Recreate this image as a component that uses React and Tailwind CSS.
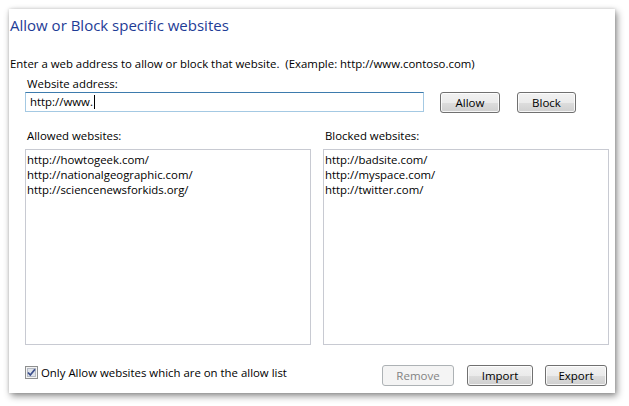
import React from "react";

const font = { fontFamily: '"Open Sans", "Noto Sans", "Liberation Sans", sans-serif' };

function WinButton({ children, w, disabled }) {
  return (
    <div
      className={
        "h-[21px] rounded-[3px] border flex items-center justify-center text-[11.5px] leading-none " +
        (disabled
          ? "border-[#adb2b5] bg-[#f4f4f4] text-[#838383]"
          : "border-[#707070] bg-[linear-gradient(#f2f2f2_0%,#ebebeb_50%,#dddddd_51%,#cfcfcf_100%)] text-black shadow-[inset_0_0_0_1px_rgba(255,255,255,0.8)]")
      }
      style={{ width: w }}
    >
      {children}
    </div>
  );
}

function ListBox({ items }) {
  return (
    <div className="w-[286px] h-[196px] border border-[#c8cad2] bg-white pl-[1px] pt-[2px] flex flex-col">
      {items.map((t) => (
        <div key={t} className="text-[11.4px] leading-[15px] text-black">
          {t}
        </div>
      ))}
    </div>
  );
}

export default function App() {
  return (
    <div className="w-[629px] h-[406px] bg-white overflow-hidden" style={font}>
      <div className="ml-[9px] mt-[9px] w-[606px] h-[384px] bg-white shadow-[2px_3px_7px_rgba(0,0,0,0.45),0_0_3px_rgba(0,0,0,0.15)] flex flex-col">
        <div className="mt-[6px] ml-[1px] h-[21px] text-[15px] leading-[21px] text-[#1e3c96]">
          Allow or Block specific websites
        </div>
        <div className="mt-[20px] ml-[1px] h-[15px] text-[11.4px] leading-[15px] text-black whitespace-pre">
          {"Enter a web address to allow or block that website.  (Example: http://www.contoso.com)"}
        </div>
        <div className="mt-[5px] ml-[18px] h-[15px] text-[11.4px] leading-[15px] text-black">
          Website address:
        </div>
        <div className="mt-[1px] ml-[16px] flex items-start h-[21px]">
          <div className="w-[399px] h-[20px] border border-[#a4c9e3] border-t-[#3d7bad] bg-white flex items-center pl-[4px] text-[11.4px] text-black">
            <span>http://www.</span>
            <span className="w-px h-[14px] bg-black ml-[1px]" />
          </div>
          <div className="ml-[16px]">
            <WinButton w={60}>Allow</WinButton>
          </div>
          <div className="ml-[17px]">
            <WinButton w={59}>Block</WinButton>
          </div>
        </div>
        <div className="mt-[15px] ml-[16px] flex h-[15px] text-[11.4px] leading-[15px] text-black">
          <div className="w-[298px] pl-[2px]">Allowed websites:</div>
          <div className="pl-[2px]">Blocked websites:</div>
        </div>
        <div className="mt-[6px] ml-[16px] flex gap-[12px]">
          <ListBox
            items={[
              "http://howtogeek.com/",
              "http://nationalgeographic.com/",
              "http://sciencenewsforkids.org/",
            ]}
          />
          <ListBox
            items={["http://badsite.com/", "http://myspace.com/", "http://twitter.com/"]}
          />
        </div>
        <div className="mt-[20px] ml-[16px] mr-[8px] flex items-center h-[21px]">
          <div className="flex items-center -mt-[6px]">
            <svg width="13" height="13" viewBox="0 0 13 13">
              <rect x="0.5" y="0.5" width="12" height="12" fill="#f4f4f4" stroke="#8e8f8f" />
              <rect x="2.5" y="2.5" width="8" height="8" fill="#dfe3ea" stroke="#b5bac4" />
              <path d="M3 6.5 L5.3 9 L10 3.3" fill="none" stroke="#3c4f8c" strokeWidth="1.8" />
            </svg>
            <span className="ml-[3px] text-[11.4px] leading-[15px] text-black">
              Only Allow websites which are on the allow list
            </span>
          </div>
          <div className="ml-auto flex">
            <WinButton w={72} disabled>
              Remove
            </WinButton>
            <div className="ml-[13px]">
              <WinButton w={66}>Import</WinButton>
            </div>
            <div className="ml-[12px]">
              <WinButton w={62}>Export</WinButton>
            </div>
          </div>
        </div>
      </div>
    </div>
  );
}
